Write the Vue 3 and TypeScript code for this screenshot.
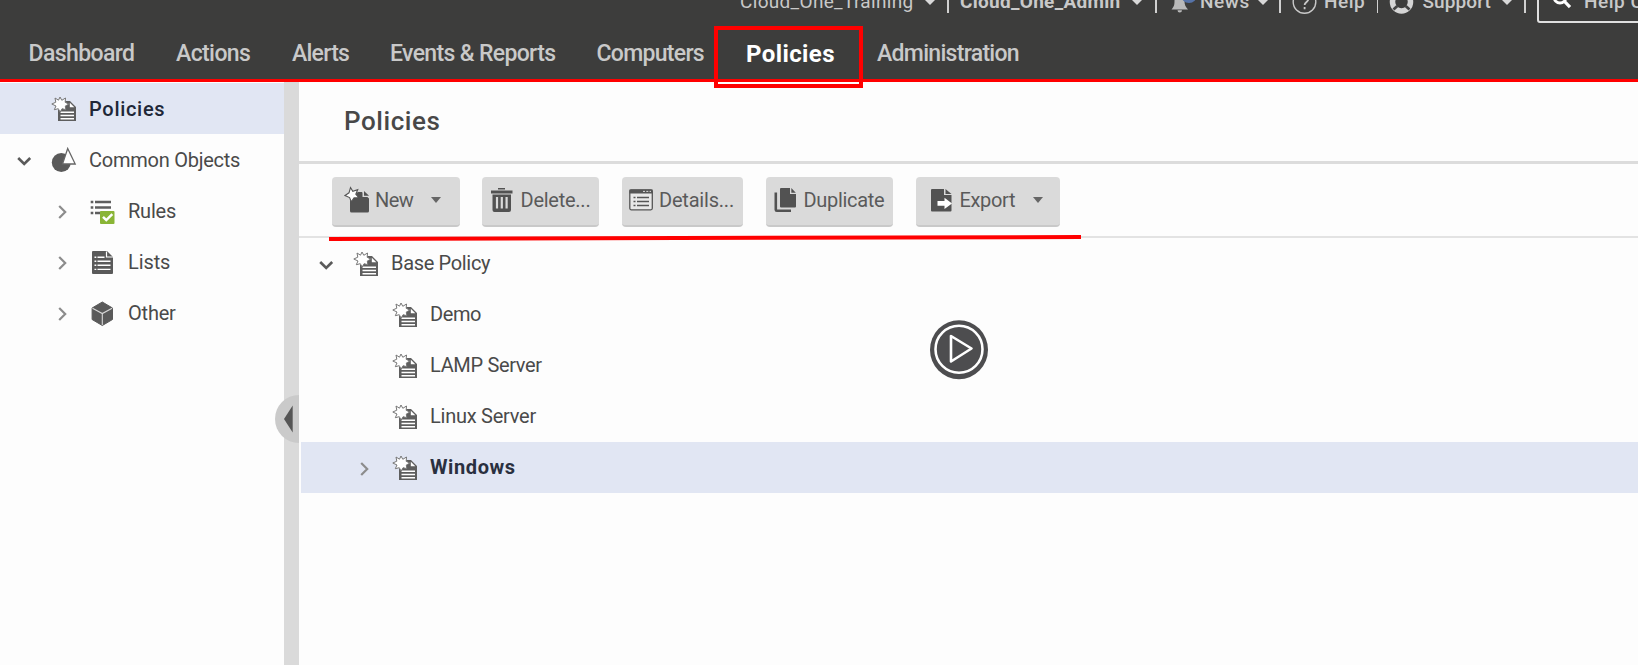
<script setup lang="ts">
import { h, type FunctionalComponent } from 'vue'

interface NavItem { label: string; spacing: number; active?: boolean }
interface TreeRow { label: string; level: number; icon: string; chevron?: 'open' | 'closed'; selected?: boolean; spacing: number }
interface ToolButton { label: string; icon: string; menu?: boolean; width: number; gap: number; pad: number; spacing: number }

const nav: NavItem[] = [
  { label: 'Dashboard', spacing: -0.6 },
  { label: 'Actions', spacing: -0.6 },
  { label: 'Alerts', spacing: -0.75 },
  { label: 'Events & Reports', spacing: -0.65 },
  { label: 'Computers', spacing: -0.7 },
  { label: 'Policies', spacing: 0.4, active: true },
  { label: 'Administration', spacing: -0.7 },
]

const sideRows: TreeRow[] = [
  { label: 'Policies', level: 0, icon: 'policy', selected: true, spacing: 0.7 },
  { label: 'Common Objects', level: 0, icon: 'shapes', chevron: 'open', spacing: -0.25 },
  { label: 'Rules', level: 1, icon: 'rules', chevron: 'closed', spacing: -0.2 },
  { label: 'Lists', level: 1, icon: 'list', chevron: 'closed', spacing: -0.1 },
  { label: 'Other', level: 1, icon: 'cube', chevron: 'closed', spacing: -0.2 },
]

const policyRows: TreeRow[] = [
  { label: 'Base Policy', level: 0, icon: 'policy', chevron: 'open', spacing: -0.33 },
  { label: 'Demo', level: 1, icon: 'policy', spacing: -0.4 },
  { label: 'LAMP Server', level: 1, icon: 'policy', spacing: -0.33 },
  { label: 'Linux Server', level: 1, icon: 'policy', spacing: -0.25 },
  { label: 'Windows', level: 1, icon: 'policy', chevron: 'closed', selected: true, spacing: 0.6 },
]

const tools: ToolButton[] = [
  { label: 'New', icon: 'new', menu: true, width: 128, gap: 22, pad: 12, spacing: -0.5 },
  { label: 'Delete...', icon: 'trash', width: 117, gap: 23, pad: 7.5, spacing: -0.25 },
  { label: 'Details...', icon: 'details', width: 121, gap: 23, pad: 6, spacing: -0.2 },
  { label: 'Duplicate', icon: 'copy', width: 127, gap: 23, pad: 6.5, spacing: -0.3 },
  { label: 'Export', icon: 'export', menu: true, width: 144, gap: 0, pad: 12.5, spacing: -0.34 },
]

const icons: Record<string, string> = {
  policy:
    '<path fill="#5e5e5e" d="M11 5h8l6 6v14H7V14l4-1z"/><path fill="#fff" d="M18.8 6.800v4.500h4.500z"/><path stroke="#fff" stroke-width="1.400" d="M9.500 16.2H23M9.500 19.5H23M9.500 22.7H23"/><path fill="#fff" stroke="#777" stroke-width="1" d="M9 1l1.800 3.300L14.500 2l-.3 4.300 3.600 1.800-3.500 2 .5 3.600-3.700-1-2 3.400-1.800-3.400-4 1L5 10 .8 8l4-1.800L4 2l3.500 2.200z"/>',
  shapes:
    '<circle cx="10.300" cy="15.500" r="9.500" fill="#5a5a5a"/><path fill="#fff" stroke="#666" stroke-width="1.300" d="M16.700 1.500l7.500 15.500H11.500z"/>',
  rules:
    '<path stroke="#5e5e5e" stroke-width="2.600" d="M.7 4h2.600M5 4h16M.7 9.500h2.600M5 9.500h16M.7 15h2.600M5 15h7"/><rect x="10" y="13" width="14.500" height="13" rx="1" fill="#8ab536"/><path fill="none" stroke="#fff" stroke-width="2.500" d="M13 18.800l3.300 3.300 6-6"/>',
  list:
    '<path fill="#5a5a5a" d="M3 2h14l6 6v16a1 1 0 0 1-1 1H3a1 1 0 0 1-1-1V3a1 1 0 0 1 1-1z"/><path fill="none" stroke="#fff" stroke-width="1.200" d="M16.500 2.500V8H23"/><path stroke="#fff" stroke-width="1.400" d="M4.500 8.200h1.800M7.500 8.200h7M4.500 12.200h1.800M7.500 12.200h13M4.500 16.300h1.800M7.500 16.300h13M4.500 20.400h1.800M7.500 20.400h13"/>',
  cube:
    '<path fill="#5a5a5a" stroke="#5a5a5a" stroke-linejoin="round" d="M12.300 2l10.200 6v11.500l-10.200 6-10.200-6V8z"/><path fill="none" stroke="#d8d8d8" stroke-width="1.100" d="M2.500 8.200l9.800 5.300 9.800-5.300M12.300 13.500V25"/>',
  new:
    '<path fill="#525252" d="M6 11l8-5h4l7 6.500V25a1.500 1.500 0 0 1-1.500 1.500h-16A1.500 1.500 0 0 1 6 25z"/><path fill="#dadada" d="M18.500 4.500v6.500h7z"/><path fill="#525252" d="M20 5l5 4.800h-5z"/><path fill="#fff" stroke="#555" stroke-width="1.100" d="M6.500 1.500l2.300 3.800 4.900-1.600-1.900 4.500 3 3.500-4.700.200-2.800 4-1.700-4.300L1 9.500 5 6.800z"/>',
  trash:
    '<path fill="#525252" d="M8 3.500h7V2h-7zM1 4.500h21.500v3H1zM2.500 8.500H21V24a2 2 0 0 1-2 2H4.500a2 2 0 0 1-2-2z"/><path stroke="#dadada" stroke-width="2.200" d="M7 11v11.500M11.800 11v11.500M16.600 11v11.500"/>',
  details:
    '<rect x="1.800" y="3.800" width="22.500" height="20" rx="1.500" fill="#e8e8e8" stroke="#555" stroke-width="1.300"/><path fill="#555" d="M1.500 3.500h23v4h-23z"/><path stroke="#ddd" stroke-width="1" stroke-dasharray="2 1.300" d="M15 5.400h8"/><path stroke="#555" stroke-width="1.600" d="M5.500 11.500h2M9 11.500h12M5.500 15.500h2M9 15.500h12M5.500 19.500h2M9 19.500h12"/>',
  copy:
    '<path fill="#525252" d="M8 2h9v6h6V20.500a1 1 0 0 1-1 1H8a1 1 0 0 1-1-1V3a1 1 0 0 1 1-1z"/><path fill="#525252" d="M18.300 2l4.500 4.700h-4.500z"/><path fill="none" stroke="#525252" stroke-width="2.600" d="M2.800 6.500v17.200a1 1 0 0 0 1 1H18"/>',
  export:
    '<path fill="#525252" d="M3 3h12v6h7.500v15.500a1 1 0 0 1-1 1H3a1 1 0 0 1-1-1V4a1 1 0 0 1 1-1z"/><path fill="#525252" d="M16.500 3l6 5h-6z"/><path fill="#fff" d="M8.500 15h7v-3.200l7.500 5.600-7.500 5.600v-3.200h-7z"/>',
}

const Icon: FunctionalComponent<{ name: string }> = (props) =>
  h('svg', { width: 26, height: 27, viewBox: '0 0 26 27', innerHTML: icons[props.name] })
Icon.props = ['name']

const Chevron: FunctionalComponent<{ state?: string }> = (props) =>
  h('svg', { width: 15, height: 15, viewBox: '0 0 15 15' }, [
    props.state
      ? h('path', {
          fill: 'none',
          stroke: props.state === 'open' ? '#5a5a5a' : '#8c8c8c',
          'stroke-width': props.state === 'open' ? 2.6 : 2.2,
          d: props.state === 'open' ? 'M1.200 4l6 6 6-6' : 'M3.200 1l6 6-6 6',
        })
      : null,
  ])
Chevron.props = ['state']
</script>

<template>
  <div class="app">
    <header class="header">
      <div class="topbar">
        <span class="tenant">Cloud_One_Training</span>
        <i class="caret" />
        <i class="sep" />
        <span class="user">Cloud_One_Admin</span>
        <i class="caret" />
        <i class="sep" />
        <svg width="24" height="24" viewBox="0 0 24 24">
          <path fill="#b9b9b9" d="M8.500 4c4 0 5 3 5 7 0 4 1 5.500 3.500 8.500H0.500C3 16.500 3.500 15 3.500 11c0-4 1-7 5-7zM6.500 20.300h4.500a2.200 2.200 0 0 1-4.500 0z" />
          <circle cx="18" cy="5" r="8" fill="#5673a8" />
        </svg>
        <span class="news">News</span>
        <i class="caret" />
        <i class="sep" />
        <svg width="26" height="26" viewBox="0 0 26 26">
          <circle cx="12.500" cy="13" r="11.300" fill="none" stroke="#c9c9c9" stroke-width="1.400" />
          <path fill="none" stroke="#c9c9c9" stroke-width="1.800" d="M8.800 10.500c.2-5 8-4.500 7.500 0-.3 2.500-3.500 2.500-3.700 5.500M12.600 18v2.200" />
        </svg>
        <span class="help">Help</span>
        <i class="sep" />
        <svg width="26" height="26" viewBox="0 0 26 26">
          <circle cx="12.500" cy="13" r="9" fill="none" stroke="#d5d5d5" stroke-width="5.500" />
          <path stroke="#444" stroke-width="2.800" d="M4.500 20.500l3.800-3.500M20.500 20.500l-3.800-3.500M4.500 5.500L8.300 9M20.500 5.500L16.700 9" />
        </svg>
        <span class="support">Support</span>
        <i class="caret" />
        <i class="sep" />
        <div class="search">
          <svg width="20" height="24" viewBox="0 0 20 24">
            <circle cx="8" cy="9" r="6" fill="none" stroke="#fff" stroke-width="2.800" />
            <path stroke="#fff" stroke-width="3.200" d="M12 13l6 6.200" />
          </svg>
          <span>Help Center</span>
        </div>
      </div>
      <nav class="nav">
        <a v-for="item in nav" :key="item.label" :class="{ active: item.active }" :style="{ letterSpacing: item.spacing + 'px' }">{{ item.label }}</a>
      </nav>
    </header>

    <div class="body">
      <aside class="sidebar">
        <div
          v-for="row in sideRows"
          :key="row.label"
          class="row"
          :class="['level' + row.level, { selected: row.selected }]"
        >
          <Chevron :state="row.chevron" />
          <Icon :name="row.icon" />
          <span :style="{ letterSpacing: row.spacing + 'px' }">{{ row.label }}</span>
        </div>
      </aside>
      <div class="divider" />
      <main class="main">
        <h1>Policies</h1>
        <div class="toolbar">
          <button
            v-for="tool in tools"
            :key="tool.label"
            :style="{ width: tool.width + 'px', marginRight: tool.gap + 'px', paddingLeft: tool.pad + 'px' }"
          >
            <Icon :name="tool.icon" />
            <span :style="{ letterSpacing: tool.spacing + 'px' }">{{ tool.label }}</span>
            <i v-if="tool.menu" class="drop" />
          </button>
        </div>
        <div
          v-for="row in policyRows"
          :key="row.label"
          class="row"
          :class="['level' + row.level, { selected: row.selected }]"
        >
          <Chevron :state="row.chevron" />
          <Icon :name="row.icon" />
          <span :style="{ letterSpacing: row.spacing + 'px' }">{{ row.label }}</span>
        </div>
      </main>
    </div>

    <svg class="handle" width="24" height="48" viewBox="0 0 24 48">
      <path fill="#cacaca" d="M24 0a24 24 0 0 0 0 48z" />
      <path fill="#555" d="M9 24l8.700-13.500v27z" />
    </svg>
    <div class="tab-frame" />
    <svg class="underline" width="754" height="8" viewBox="0 0 754 8">
      <path fill="#f00" d="M0 2L752 0v4L0 6z" />
    </svg>
    <svg class="play" width="58" height="60" viewBox="0 0 58 60">
      <ellipse cx="29" cy="29.700" rx="29" ry="29.500" fill="#4d4d4f" />
      <circle cx="29" cy="29.200" r="23.500" fill="none" stroke="#fff" stroke-width="2.600" />
      <path fill="none" stroke="#fff" stroke-width="2.600" stroke-linejoin="round" d="M21 16v25.500l20.500-13z" />
    </svg>
  </div>
</template>

<style>
body { margin: 0; overflow: hidden; }
</style>

<style scoped>
.app {
  position: relative;
  width: 1638px;
  height: 665px;
  overflow: hidden;
  background: #fdfdfd;
  color: #4a4a4a;
  font: 400 20px/24px Roboto, "Open Sans", sans-serif;
}
.app :deep(svg) { display: block; flex: none; }
.header {
  display: flow-root;
  height: 79px;
  overflow: hidden;
  background: #3d3d3c;
  border-bottom: 3px solid #f00;
  color: #c9c9c9;
}
.topbar {
  display: grid;
  grid-template-columns: 184px 23px 13px 171px 24px 15.500px 29.500px 56.500px 22.500px 13px 32px 52.500px 12px 34px 78.500px 23px 13px 110px;
  align-items: center;
  height: 24px;
  margin-top: -11px;
  padding-left: 740px;
  font-size: 19px;
  white-space: nowrap;
}
.tenant { letter-spacing: 0.32px; }
.user { font-weight: 700; letter-spacing: 0.3px; }
.news { font-weight: 500; letter-spacing: 0.6px; }
.help { font-weight: 500; letter-spacing: 0.5px; }
.support { font-weight: 500; letter-spacing: 0.1px; }
.caret {
  width: 0;
  height: 0;
  border: 6px solid transparent;
  border-top: 6px solid #d8d8d8;
  border-bottom: 0;
  margin-top: 0;
}
.sep { width: 1.500px; height: 22px; background: #d0d0d0; }
.search {
  display: flex;
  gap: 12px;
  box-sizing: border-box;
  align-items: center;
  width: 110px;
  height: 42px;
  margin: -10px 0;
  padding: 1px 0 2px 13px;
  border: 2px solid #e0e0e0;
  border-radius: 3px;
  font-weight: 500;
}
.search span { letter-spacing: 0.5px; }
.search svg { margin-top: -4px; }
.nav {
  display: grid;
  grid-template-columns: 147.500px 116px 98px 206.500px 149.500px 131px auto;
  align-items: center;
  height: 51px;
  margin-top: 15px;
  padding-left: 28.500px;
  font-size: 23px;
  font-weight: 500;
  white-space: nowrap;
}
.nav .active { color: #fff; font-size: 24px; font-weight: 700; }
.body { display: flex; height: 583px; }
.sidebar { width: 284px; padding-top: 1px; }
.divider { width: 15px; background: #dadada; }
.main { flex: 1; }
.row {
  display: grid;
  grid-template-columns: 34px 38px auto;
  align-items: center;
  justify-content: start;
  box-sizing: border-box;
  height: 51.1px;
  padding-left: 17px;
  white-space: nowrap;
}
.row svg:nth-child(2) { margin-top: 2px; }
.row svg:first-child { margin-top: 4px; }
.sidebar .level1 { padding-left: 56px; }
.selected { background: #e1e6f3; color: #202737; font-weight: 500; }
.main .row { margin-left: 2px; padding-left: 18px; }
.main .level1 { padding-left: 57px; }
.main .selected { font-weight: 700; color: #2a303f; }
.main .selected span { margin-top: -2px; }
h1 {
  box-sizing: border-box;
  height: 82px;
  margin: 0;
  padding: 23px 0 0 45px;
  border-bottom: 3px solid #dcdcdc;
  color: #484848;
  font-size: 26px;
  font-weight: 500;
  line-height: 32px;
  letter-spacing: 0.55px;
}
.toolbar {
  display: flex;
  align-items: flex-start;
  box-sizing: border-box;
  height: 73.600px;
  padding: 12.500px 0 0 33px;
  border-bottom: 2px solid #e3e3e3;
}
button {
  display: flex;
  flex: none;
  align-items: center;
  box-sizing: border-box;
  height: 50px;
  padding: 0 0 2px;
  border: 0;
  border-bottom: 2px solid #c9c9c9;
  border-radius: 4px;
  background: #dadada;
  color: #5a5a5a;
  font: inherit;
  white-space: nowrap;
}
button svg { margin-right: 5px; }
button span { margin-top: 0; }
.drop {
  margin: 1px 0 0 17.500px;
  border: 5.500px solid transparent;
  border-top: 6px solid #666;
  border-bottom: 0;
}
.handle { position: absolute; left: 275px; top: 395px; }
.tab-frame {
  position: absolute;
  left: 714px;
  top: 26px;
  box-sizing: border-box;
  width: 149px;
  height: 62px;
  border: 4px solid #f00;
}
.underline { position: absolute; left: 329px; top: 235px; }
.play { position: absolute; left: 930px; top: 320px; }
</style>
